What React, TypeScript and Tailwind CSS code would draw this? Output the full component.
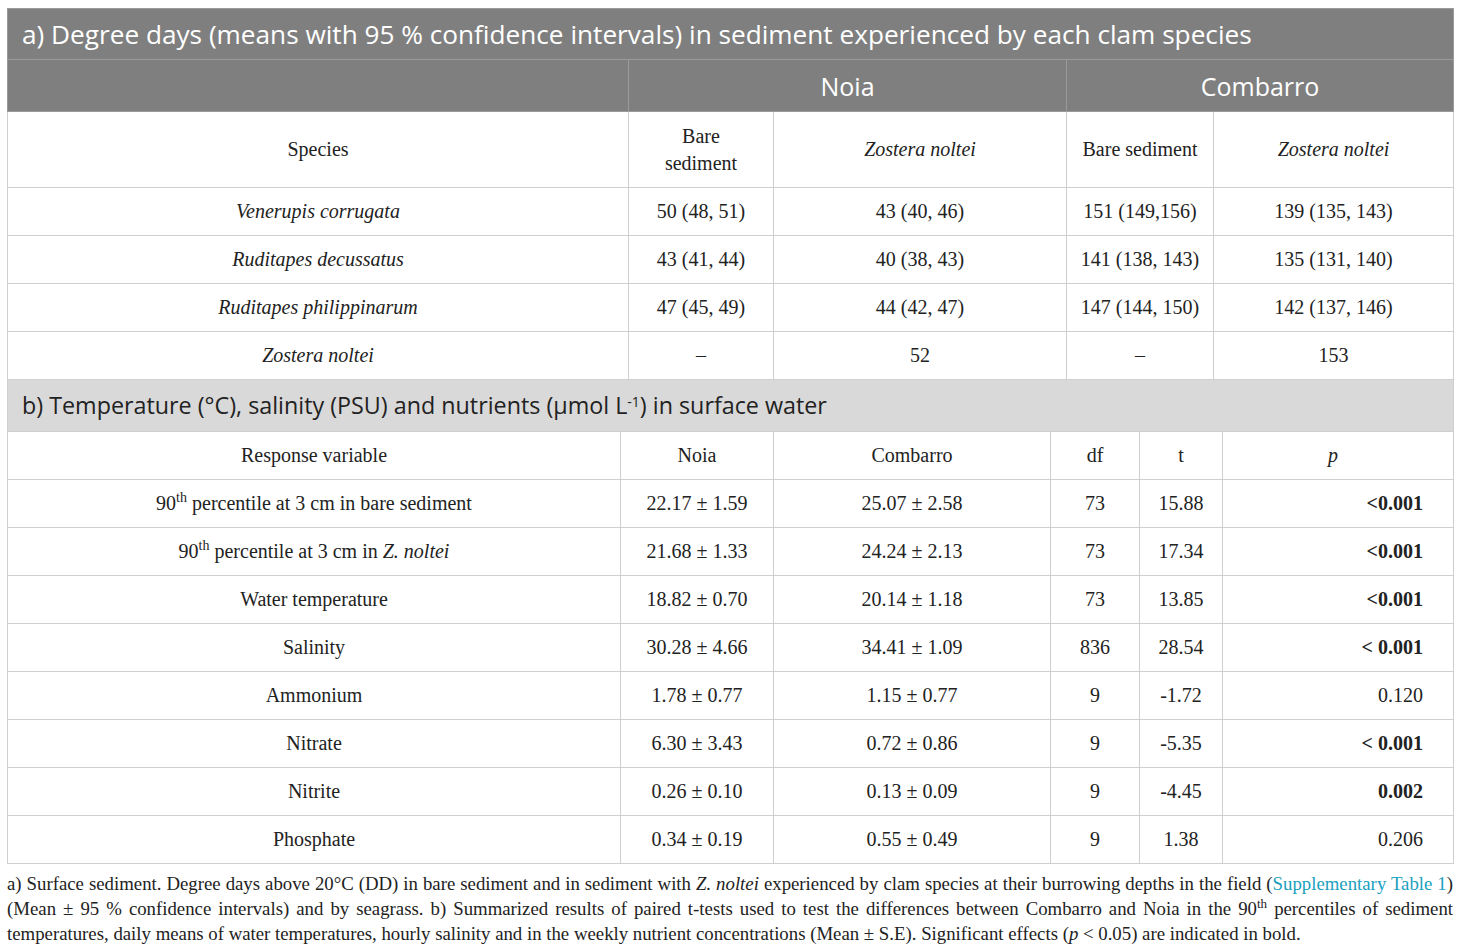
import React from "react";

const serif = { fontFamily: '"Liberation Serif", "Times New Roman", serif' };
const sans = { fontFamily: '"Open Sans", "Noto Sans", sans-serif' };

const td = "border border-[#cfcfcf] text-center align-middle px-2 text-[20px] leading-[27px] text-[#222]";

type RowA = [React.ReactNode, string, string, string, string];
const rowsA: RowA[] = [
  [<i>Venerupis corrugata</i>, "50 (48, 51)", "43 (40, 46)", "151 (149,156)", "139 (135, 143)"],
  [<i>Ruditapes decussatus</i>, "43 (41, 44)", "40 (38, 43)", "141 (138, 143)", "135 (131, 140)"],
  [<i>Ruditapes philippinarum</i>, "47 (45, 49)", "44 (42, 47)", "147 (144, 150)", "142 (137, 146)"],
  [<i>Zostera noltei</i>, "–", "52", "–", "153"],
];

const sup = "text-[14px] relative -top-[8px]";

type RowB = [React.ReactNode, string, string, string, string, string, boolean];
const rowsB: RowB[] = [
  [<>90<sup className={sup}>th</sup> percentile at 3 cm in bare sediment</>, "22.17 ± 1.59", "25.07 ± 2.58", "73", "15.88", "<0.001", true],
  [<>90<sup className={sup}>th</sup> percentile at 3 cm in <i>Z. noltei</i></>, "21.68 ± 1.33", "24.24 ± 2.13", "73", "17.34", "<0.001", true],
  ["Water temperature", "18.82 ± 0.70", "20.14 ± 1.18", "73", "13.85", "<0.001", true],
  ["Salinity", "30.28 ± 4.66", "34.41 ± 1.09", "836", "28.54", "< 0.001", true],
  ["Ammonium", "1.78 ± 0.77", "1.15 ± 0.77", "9", "-1.72", "0.120", false],
  ["Nitrate", "6.30 ± 3.43", "0.72 ± 0.86", "9", "-5.35", "< 0.001", true],
  ["Nitrite", "0.26 ± 0.10", "0.13 ± 0.09", "9", "-4.45", "0.002", true],
  ["Phosphate", "0.34 ± 0.19", "0.55 ± 0.49", "9", "1.38", "0.206", false],
];

export default function App() {
  return (
    <div className="w-[1460px] h-[952px] bg-white overflow-hidden pt-[8px] pl-[7px]" style={serif}>
      <div className="w-[1446px]">
        <table className="w-[1446px] border-collapse table-fixed">
          <colgroup>
            <col className="w-[621px]" />
            <col className="w-[145px]" />
            <col className="w-[293px]" />
            <col className="w-[147px]" />
            <col className="w-[240px]" />
          </colgroup>
          <tbody>
            <tr className="h-[51px]">
              <td colSpan={5} className="bg-[#7f7f7f] border border-[#9a9a9a] text-white text-[26.2px] px-[14px] text-left leading-[30px] whitespace-nowrap" style={sans}>
                a) Degree days (means with 95 % confidence intervals) in sediment experienced by each clam species
              </td>
            </tr>
            <tr className="h-[52px]">
              <td className="bg-[#7f7f7f] border border-[#9a9a9a]"></td>
              <td colSpan={2} className="bg-[#7f7f7f] border border-[#9a9a9a] text-white text-[25px] text-center leading-[30px]" style={sans}>Noia</td>
              <td colSpan={2} className="bg-[#7f7f7f] border border-[#9a9a9a] text-white text-[25px] text-center leading-[30px]" style={sans}>Combarro</td>
            </tr>
            <tr className="h-[76px]">
              <td className={td}>Species</td>
              <td className={td}>Bare<br />sediment</td>
              <td className={td}><i>Zostera noltei</i></td>
              <td className={td + " whitespace-nowrap"}>Bare sediment</td>
              <td className={td}><i>Zostera noltei</i></td>
            </tr>
            {rowsA.map((r, i) => (
              <tr key={i} className="h-[48px]">
                {r.map((c, j) => (
                  <td key={j} className={td + " whitespace-nowrap"}>{c}</td>
                ))}
              </tr>
            ))}
          </tbody>
        </table>
        <table className="w-[1446px] border-collapse table-fixed">
          <colgroup>
            <col className="w-[613px]" />
            <col className="w-[153px]" />
            <col className="w-[277px]" />
            <col className="w-[89px]" />
            <col className="w-[83px]" />
            <col className="w-[231px]" />
          </colgroup>
          <tbody>
            <tr className="h-[51px]">
              <td colSpan={6} className="bg-[#d9d9d9] border border-[#cfcfcf] border-t-0 text-[#222] text-[23.3px] px-[14px] text-left leading-[30px] whitespace-nowrap" style={sans}>
                b) Temperature (°C), salinity (PSU) and nutrients (μmol L<sup className="text-[14px]">-1</sup>) in surface water
              </td>
            </tr>
            <tr className="h-[48px]">
              <td className={td}>Response variable</td>
              <td className={td}>Noia</td>
              <td className={td}>Combarro</td>
              <td className={td}>df</td>
              <td className={td}>t</td>
              <td className={td + " pr-[18px]"}><i>p</i></td>
            </tr>
            {rowsB.map((r, i) => (
              <tr key={i} className="h-[48px]">
                <td className={td + " whitespace-nowrap"}>{r[0]}</td>
                <td className={td}>{r[1]}</td>
                <td className={td}>{r[2]}</td>
                <td className={td}>{r[3]}</td>
                <td className={td}>{r[4]}</td>
                <td className={td + " !text-right pr-[30px] " + (r[6] ? "font-bold" : "")}>{r[5]}</td>
              </tr>
            ))}
          </tbody>
        </table>
        <div className="mt-[7px] text-[18.8px] leading-[25px] text-[#222]">
          <div className="whitespace-nowrap text-justify [text-align-last:justify]">
            a) Surface sediment. Degree days above 20°C (DD) in bare sediment and in sediment with <i>Z. noltei</i> experienced by clam species at their burrowing depths in the field (<span className="text-[#1a9fc0]">Supplementary Table 1</span>)
          </div>
          <div className="whitespace-nowrap text-justify [text-align-last:justify]">
            (Mean ± 95 % confidence intervals) and by seagrass. b) Summarized results of paired t-tests used to test the differences between Combarro and Noia in the 90<sup className="text-[13px]">th</sup> percentiles of sediment
          </div>
          <div className="whitespace-nowrap">
            temperatures, daily means of water temperatures, hourly salinity and in the weekly nutrient concentrations (Mean ± S.E). Significant effects (<i>p</i> &lt; 0.05) are indicated in bold.
          </div>
        </div>
      </div>
    </div>
  );
}
